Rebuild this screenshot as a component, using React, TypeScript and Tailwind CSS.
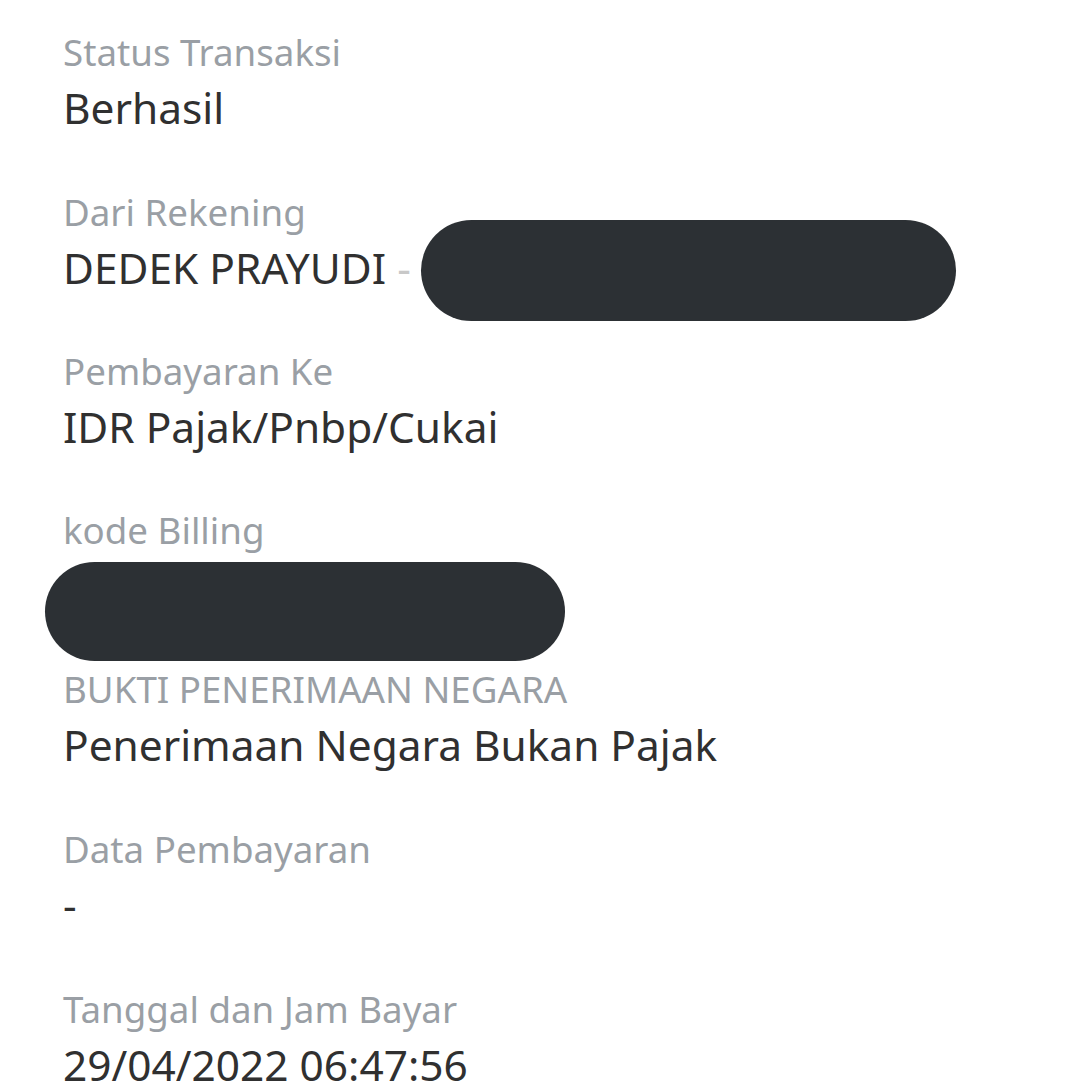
import React from "react";

const font = { fontFamily: '"Noto Sans", "Open Sans", sans-serif' };

function Label({ children }: { children: React.ReactNode }) {
  return <div className="text-[36.7px] leading-[55px] text-[#9a9fa5] whitespace-nowrap">{children}</div>;
}

function Value({ children }: { children: React.ReactNode }) {
  return <div className="text-[42.4px] leading-[55px] text-[#303030] whitespace-nowrap">{children}</div>;
}

export default function App() {
  return (
    <div className="w-[1080px] h-[1090px] bg-white overflow-hidden pl-[63px] pt-[25px]" style={font}>
      <div className="flex flex-col">
        <div className="h-[160px]">
          <Label>Status Transaksi</Label>
          <Value>Berhasil</Value>
        </div>
        <div className="h-[159px]">
          <Label>Dari Rekening</Label>
          <div className="relative">
            <Value>
              DEDEK PRAYUDI <span className="text-[#c8c8c8]">-</span>
            </Value>
            <div className="absolute left-[358px] top-[-20px] w-[535px] h-[101px] rounded-full bg-[#2c3034]" />
          </div>
        </div>
        <div className="h-[159px]">
          <Label>Pembayaran Ke</Label>
          <Value>IDR Pajak/Pnbp/Cukai</Value>
        </div>
        <div className="h-[159px]">
          <Label>kode Billing</Label>
          <div className="relative h-[55px]">
            <div className="absolute left-[-18px] top-[4px] w-[520px] h-[99px] rounded-full bg-[#2c3034]" />
          </div>
        </div>
        <div className="h-[160px]">
          <Label>BUKTI PENERIMAAN NEGARA</Label>
          <Value>Penerimaan Negara Bukan Pajak</Value>
        </div>
        <div className="h-[160px]">
          <Label>Data Pembayaran</Label>
          <Value>-</Value>
        </div>
        <div className="h-[160px]">
          <Label>Tanggal dan Jam Bayar</Label>
          <Value>29/04/2022 06:47:56</Value>
        </div>
      </div>
    </div>
  );
}
